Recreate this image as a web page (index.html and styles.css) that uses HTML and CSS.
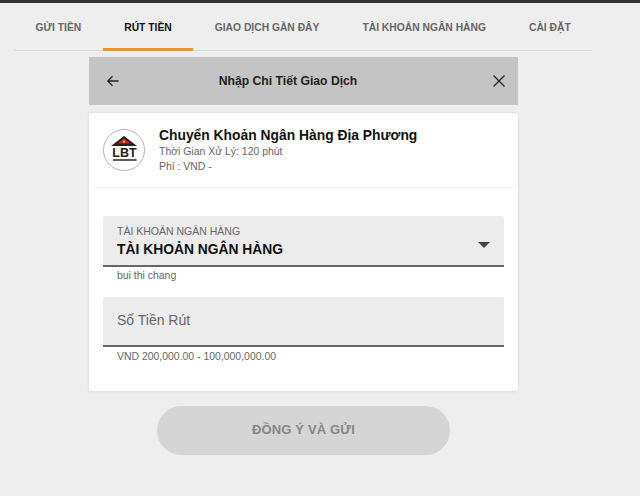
FILE: index.html
```html
<!DOCTYPE html>
<html lang="vi">
<head>
    <meta charset="UTF-8">
    <meta name="viewport" content="width=device-width, initial-scale=1.0">
    <title>Rút Tiền</title>
    <link rel="stylesheet" href="styles.css">
</head>
<body>
    <div class="top-bar"></div>

    <nav class="tabs">
        <a class="tab">GỬI TIỀN</a>
        <a class="tab active">RÚT TIỀN</a>
        <a class="tab">GIAO DỊCH GẦN ĐÂY</a>
        <a class="tab">TÀI KHOẢN NGÂN HÀNG</a>
        <a class="tab">CÀI ĐẶT</a>
    </nav>

    <main class="panel">
        <header class="panel-header">
            <svg class="icon" viewBox="0 0 14 14" width="14" height="14">
                <path d="M12.5 7H1.8M6.5 2.2 1.8 7l4.7 4.8" fill="none" stroke="#222" stroke-width="1.3"/>
            </svg>
            <h1>Nhập Chi Tiết Giao Dịch</h1>
            <svg class="icon" viewBox="0 0 14 14" width="14" height="14">
                <path d="M1.5 1.5l11 11M12.5 1.5l-11 11" fill="none" stroke="#222" stroke-width="1.3"/>
            </svg>
        </header>

        <section class="card">
            <div class="method">
                <div class="logo">
                    <svg viewBox="0 0 42 42" width="42" height="42">
                        <circle cx="21" cy="21" r="20.5" fill="#fff" stroke="#b5b5b5"/>
                        <path d="M8 17 21 7l13 10z" fill="#2a2020"/>
                        <path d="M14.5 14.5 21 9.5l6.5 5z" fill="#c8281e"/>
                        <circle cx="21" cy="12.6" r="1.1" fill="#f5d020"/>
                        <text x="21.5" y="27.5" text-anchor="middle" class="logo-text">LBT</text>
                        <rect x="10" y="30.2" width="23.5" height="1.6" fill="#333"/>
                    </svg>
                </div>
                <div class="method-info">
                    <h2>Chuyển Khoản Ngân Hàng Địa Phương</h2>
                    <p>Thời Gian Xử Lý: 120 phút</p>
                    <p>Phí : VND -</p>
                </div>
            </div>

            <form class="form">
                <div class="field field-select">
                    <div class="field-box">
                        <label>TÀI KHOẢN NGÂN HÀNG</label>
                        <div class="field-value">TÀI KHOẢN NGÂN HÀNG</div>
                        <span class="caret"></span>
                    </div>
                    <p class="hint">bui thi chang</p>
                </div>
                <div class="field field-input">
                    <div class="field-box">
                        <div class="placeholder">Số Tiền Rút</div>
                    </div>
                    <p class="hint">VND 200,000.00 - 100,000,000.00</p>
                </div>
            </form>
        </section>

        <button class="submit" type="button">ĐỒNG Ý VÀ GỬI</button>
    </main>
</body>
</html>
```

FILE: styles.css
```css
:root {
    --bg-color: #eeeeee;
    --border-color: #d9d9d9;
    --field-bg: #ececec;
    --text-color: #111;
    --text-muted: #666;
    --accent-color: #f7941d;
}
body {
    font-family: "Liberation Sans", Arial, sans-serif;
    background-color: var(--bg-color);
    color: var(--text-color);
    margin: 0;
    height: 496px;
    overflow: hidden;
}
.top-bar { height: 3px; background-color: #333; }

.tabs {
    display: flex;
    width: 578px;
    margin-left: 14px;
    height: 47px;
    border-bottom: 1px solid var(--border-color);
}
.tab {
    height: 47px;
    line-height: 50px;
    padding: 0 21.5px;
    box-sizing: border-box;
    font-size: 10.3px;
    font-weight: 700;
    color: #666;
    white-space: nowrap;
}
.tab.active { color: #111; border-bottom: 3px solid var(--accent-color); height: 48px; }

.panel { width: 429px; margin: 6px 0 0 89px; }
.panel-header {
    display: flex;
    align-items: center;
    justify-content: space-between;
    height: 48px;
    padding: 0 12px 0 17px;
    background-color: #c4c4c4;
}
.panel-header h1 { margin: 0 36px 0 0; font-size: 12.2px; font-weight: 700; color: #222; }
.icon { display: block; }

.card {
    margin-top: 8px;
    height: 278px;
    background-color: #fff;
    border-radius: 3px;
    box-shadow: 0 0 3px rgba(0, 0, 0, 0.12);
}
.method {
    display: flex;
    align-items: center;
    gap: 14px;
    height: 74px;
    padding: 0 14px;
    border-bottom: 1px solid #f2f2f2;
}
.logo { width: 42px; height: 42px; }
.logo-text { font-size: 12.5px; font-weight: 700; fill: #222; }
.method-info { padding-top: 2px; }
.method-info h2 { margin: 0 0 3px; font-size: 13.85px; font-weight: 700; color: #111; }
.method-info p { margin: 0 0 3px; font-size: 10.45px; line-height: 12px; color: #666; }

.form { padding: 28px 14px 0; }
.field-box {
    position: relative;
    box-sizing: border-box;
    height: 51px;
    padding: 9px 14px 0;
    background-color: var(--field-bg);
    border-bottom: 2px solid #666;
    border-radius: 2px 2px 0 0;
}
.field-box label { display: block; font-size: 10.5px; line-height: 12px; color: #666; }
.field-value { margin-top: 3px; font-size: 13.85px; font-weight: 700; line-height: 18px; color: #111; }
.caret {
    position: absolute;
    right: 14px;
    top: 26px;
    border-left: 6px solid transparent;
    border-right: 6px solid transparent;
    border-top: 6.5px solid #444;
}
.hint { margin: 2px 0 0 14px; font-size: 10.45px; line-height: 13px; color: #666; }
.field-input { margin-top: 15px; }
.field-input .field-box { height: 50px; padding-top: 15px; }
.field-input .hint { margin-top: 3px; }
.placeholder { font-size: 14px; line-height: 16px; color: #666; }

.submit {
    display: block;
    width: 293px;
    height: 49px;
    margin: 15px 0 0 68px;
    padding-bottom: 3px;
    border: 0;
    border-radius: 25px;
    background-color: #d5d5d5;
    font-family: inherit;
    font-size: 13px;
    font-weight: 700;
    letter-spacing: 0.15px;
    color: #868686;
}
```
